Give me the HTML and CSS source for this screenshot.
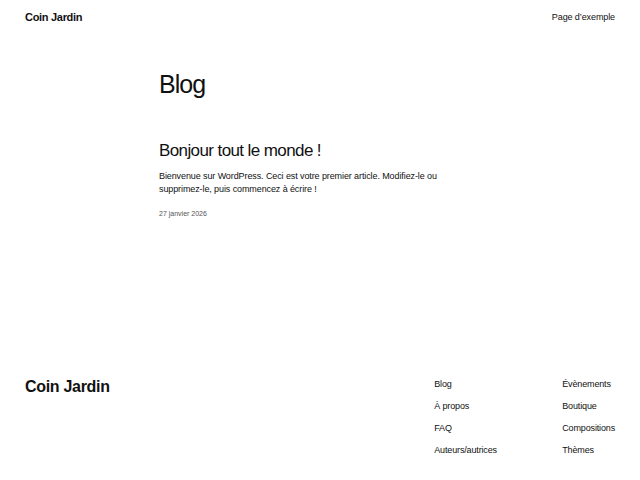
FILE: index.html
```html
<!DOCTYPE html>
<html lang="fr">
<head>
<meta charset="utf-8">
<title>Blog – Coin Jardin</title>
<link rel="stylesheet" href="styles.css">
</head>
<body>
<header class="site-header">
  <a class="site-title" href="#">Coin Jardin</a>
  <nav class="header-nav"><a href="#">Page d’exemple</a></nav>
</header>
<main class="content">
  <h1 class="page-title">Blog</h1>
  <article class="post">
    <h2 class="post-title">Bonjour tout le monde !</h2>
    <p class="post-excerpt">Bienvenue sur WordPress. Ceci est votre premier article. Modifiez-le ou supprimez-le, puis commencez à écrire !</p>
    <time class="post-date">27 janvier 2026</time>
  </article>
</main>
<footer class="site-footer">
  <a class="footer-title" href="#">Coin Jardin</a>
  <div class="footer-navs">
    <ul class="footer-col">
      <li><a href="#">Blog</a></li>
      <li><a href="#">À propos</a></li>
      <li><a href="#">FAQ</a></li>
      <li><a href="#">Auteurs/autrices</a></li>
    </ul>
    <ul class="footer-col">
      <li><a href="#">Évènements</a></li>
      <li><a href="#">Boutique</a></li>
      <li><a href="#">Compositions</a></li>
      <li><a href="#">Thèmes</a></li>
    </ul>
  </div>
</footer>
</body>
</html>
```
FILE: styles.css
```css
* { box-sizing: border-box; }
html, body { margin: 0; padding: 0; }
body {
  font-family: "Liberation Sans", Arial, sans-serif;
  color: #111;
  background: #fff;
  width: 640px;
  height: 480px;
  overflow: hidden;
}
a { color: inherit; text-decoration: none; }

.site-header {
  display: flex;
  justify-content: space-between;
  align-items: flex-start;
  padding: 10px 25px 0 25px;
  height: 34px;
}
.site-title {
  font-weight: bold;
  font-size: 11px;
  line-height: 14px;
  letter-spacing: -0.3px;
}
.header-nav {
  font-size: 9px;
  line-height: 14px;
  letter-spacing: -0.1px;
}

.content {
  width: 322px;
  margin: 0 auto;
  padding-top: 35px;
  height: 343px;
}
.page-title {
  margin: 0;
  font-weight: normal;
  font-size: 25px;
  line-height: 30px;
  letter-spacing: -1px;
}
.post { margin-top: 41px; }
.post-title {
  margin: 0;
  font-weight: normal;
  font-size: 17px;
  line-height: 22px;
  letter-spacing: -0.6px;
}
.post-excerpt {
  margin: 8px 0 0 0;
  font-size: 9px;
  line-height: 13px;
  letter-spacing: -0.1px;
}
.post-date {
  display: block;
  margin-top: 13px;
  font-size: 7px;
  line-height: 10px;
  color: #555;
}

.site-footer {
  display: flex;
  justify-content: space-between;
  align-items: flex-start;
  padding: 0 25px;
}
.footer-title {
  font-weight: bold;
  font-size: 16px;
  line-height: 20px;
  letter-spacing: -0.3px;
}
.footer-navs {
  display: flex;
}
.footer-col {
  list-style: none;
  margin: 0;
  padding: 0;
  display: flex;
  flex-direction: column;
  gap: 8px;
  font-size: 9px;
  line-height: 14px;
  letter-spacing: -0.15px;
  width: 128px;
}
.footer-col:last-child { width: auto; }
```
